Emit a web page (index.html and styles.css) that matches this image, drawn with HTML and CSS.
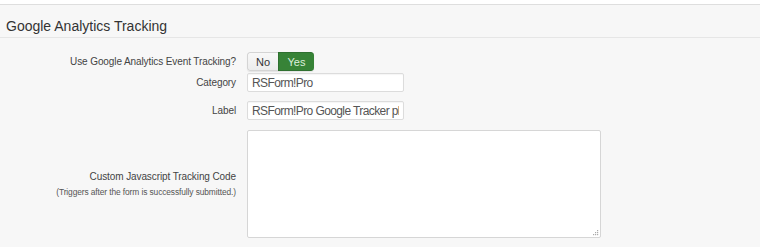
FILE: index.html
```html
<!DOCTYPE html>
<html lang="en">
<head>
    <meta charset="UTF-8">
    <title>Google Analytics Tracking</title>
    <link rel="stylesheet" href="styles.css">
</head>
<body>
    <div class="panel">
        <h3 class="panel-title">Google Analytics Tracking</h3>

        <div class="form-row row-toggle">
            <label class="form-label">Use Google Analytics Event Tracking?</label>
            <div class="toggle">
                <span class="toggle-btn">No</span>
                <span class="toggle-btn active">Yes</span>
            </div>
        </div>

        <div class="form-row row-cat">
            <label class="form-label">Category</label>
            <input class="text-input" type="text" value="RSForm!Pro">
        </div>

        <div class="form-row row-label">
            <label class="form-label">Label</label>
            <input class="text-input" type="text" value="RSForm!Pro Google Tracker plugin">
        </div>

        <div class="form-row row-code">
            <label class="form-label">
                Custom Javascript Tracking Code
                <small class="form-note">(Triggers after the form is successfully submitted.)</small>
            </label>
            <div class="code-wrap">
                <textarea class="code-input"></textarea>
                <svg class="grip" width="7" height="7" viewBox="0 0 7 7">
                    <rect x="5" y="1" width="1.2" height="1.2" fill="#aaa"/>
                    <rect x="3" y="3" width="1.2" height="1.2" fill="#aaa"/>
                    <rect x="5" y="3" width="1.2" height="1.2" fill="#aaa"/>
                    <rect x="1" y="5" width="1.2" height="1.2" fill="#aaa"/>
                    <rect x="3" y="5" width="1.2" height="1.2" fill="#aaa"/>
                    <rect x="5" y="5" width="1.2" height="1.2" fill="#aaa"/>
                </svg>
            </div>
        </div>
    </div>
</body>
</html>
```

FILE: styles.css
```css
html, body {
    margin: 0;
    padding: 0;
}

body {
    font-family: 'Liberation Sans', Arial, sans-serif;
    background: #f7f7f7;
    color: #333;
    border-top: 4px solid #fff;
    height: 243px;
    overflow: hidden;
}

.panel {
    border-top: 1px solid #dedede;
}

.panel-title {
    margin: 0;
    padding: 11px 0 1px 6px;
    height: 20px;
    line-height: 20px;
    font-size: 14px;
    font-weight: normal;
    color: #333;
    border-bottom: 1px solid #e6e6e6;
}

.form-row {
    display: grid;
    grid-template-columns: 236px auto;
    column-gap: 11px;
    align-items: center;
    justify-items: start;
}

.row-toggle {
    margin-top: 14px;
}

.row-cat {
    margin-top: 2px;
}

.row-label {
    margin-top: 9px;
}

.row-code {
    margin-top: 10px;
}

.form-label {
    justify-self: end;
    text-align: right;
    font-size: 10px;
    letter-spacing: -0.1px;
    color: #444;
}

.form-note {
    display: block;
    margin-top: 5px;
    font-size: 8.4px;
    letter-spacing: -0.1px;
    color: #555;
}

.toggle {
    display: flex;
    height: 19px;
    border-radius: 3px;
    overflow: hidden;
    box-shadow: 0 1px 1px rgba(0, 0, 0, 0.08);
}

.toggle-btn {
    display: flex;
    align-items: center;
    justify-content: center;
    font-size: 11px;
    color: #333;
    background: linear-gradient(#f8f8f8, #ececec);
    border: 1px solid #d4d4d4;
    border-right: none;
    border-radius: 3px 0 0 3px;
    width: 30px;
}

.toggle-btn.active {
    width: 35px;
    background: #378337;
    border-color: #2f7030;
    border-radius: 0 3px 3px 0;
    color: #dcefdc;
}

.text-input {
    box-sizing: border-box;
    width: 157px;
    height: 19px;
    margin: 0;
    padding: 0 4px;
    font-family: inherit;
    font-size: 12px;
    letter-spacing: -0.6px;
    color: #555;
    background: #fff;
    border: 1px solid #dcdcdc;
    border-radius: 2px;
    box-shadow: inset 0 1px 1px rgba(0, 0, 0, 0.04);
}

.code-wrap {
    position: relative;
    width: 354px;
    height: 108px;
}

.code-input {
    display: block;
    box-sizing: border-box;
    width: 100%;
    height: 100%;
    margin: 0;
    background: #fff;
    border: 1px solid #d6d6d6;
    border-radius: 2px;
    resize: none;
}

.grip {
    position: absolute;
    right: 2px;
    bottom: 2px;
}
```
